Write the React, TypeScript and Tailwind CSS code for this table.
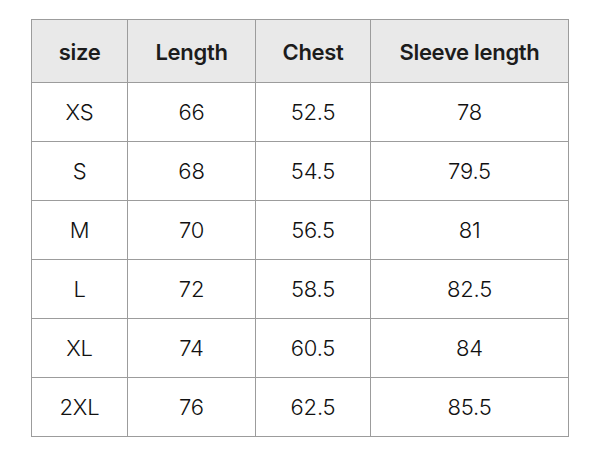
const rows = [
  ["XS", "66", "52.5", "78"],
  ["S", "68", "54.5", "79.5"],
  ["M", "70", "56.5", "81"],
  ["L", "72", "58.5", "82.5"],
  ["XL", "74", "60.5", "84"],
  ["2XL", "76", "62.5", "85.5"],
];

const headers = ["size", "Length", "Chest", "Sleeve length"];
const widths = ["w-[96px]", "w-[128px]", "w-[115px]", "w-[198px]"];

export default function App() {
  return (
    <div className="w-[600px] h-[456px] bg-white pt-[19px] pl-[31px] font-['Inter',sans-serif] text-[#1c1c1c]">
      <table className="border-collapse table-fixed w-[538px] text-center">
        <thead>
          <tr className="bg-[#e9e9e9]">
            {headers.map((h, i) => (
              <th
                key={h}
                className={`${widths[i]} h-[63px] border border-[#9c9c9c] text-[22px] font-semibold tracking-[-0.3px] p-0 pt-[2px]`}
              >
                {h}
              </th>
            ))}
          </tr>
        </thead>
        <tbody>
          {rows.map((r) => (
            <tr key={r[0]}>
              {r.map((c, i) => (
                <td key={i} className="h-[59px] border border-[#9c9c9c] text-[22px] font-light tracking-[-0.2px] p-0 text-[#111]">
                  {c}
                </td>
              ))}
            </tr>
          ))}
        </tbody>
      </table>
    </div>
  );
}
